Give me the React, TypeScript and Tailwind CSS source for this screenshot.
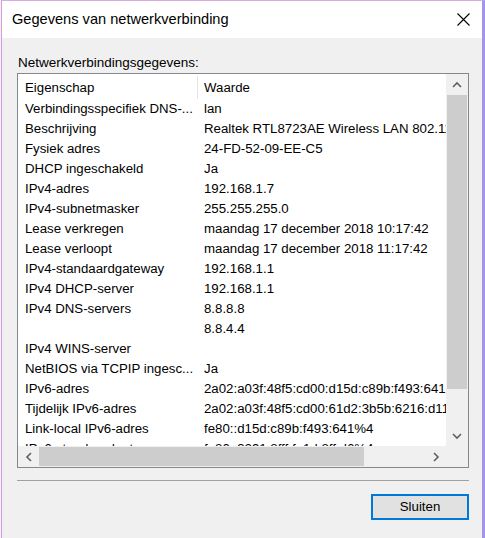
import React from "react";

const rows: [string, string][] = [
  ["Verbindingsspecifiek DNS-...", "lan"],
  ["Beschrijving", "Realtek RTL8723AE Wireless LAN 802.11n PCI-E NIC"],
  ["Fysiek adres", "24-FD-52-09-EE-C5"],
  ["DHCP ingeschakeld", "Ja"],
  ["IPv4-adres", "192.168.1.7"],
  ["IPv4-subnetmasker", "255.255.255.0"],
  ["Lease verkregen", "maandag 17 december 2018 10:17:42"],
  ["Lease verloopt", "maandag 17 december 2018 11:17:42"],
  ["IPv4-standaardgateway", "192.168.1.1"],
  ["IPv4 DHCP-server", "192.168.1.1"],
  ["IPv4 DNS-servers", "8.8.8.8"],
  ["", "8.8.4.4"],
  ["IPv4 WINS-server", ""],
  ["NetBIOS via TCPIP ingesc...", "Ja"],
  ["IPv6-adres", "2a02:a03f:48f5:cd00:d15d:c89b:f493:641"],
  ["Tijdelijk IPv6-adres", "2a02:a03f:48f5:cd00:61d2:3b5b:6216:d11c"],
  ["Link-local IPv6-adres", "fe80::d15d:c89b:f493:641%4"],
  ["IPv6-standaardgateway", "fe80::3291:8fff:fe1d:8ff:d6%4"],
];

function Chevron({ dir }: { dir: "up" | "down" | "left" | "right" }) {
  const d =
    dir === "up"
      ? "M1 6 L5 2 L9 6"
      : dir === "down"
      ? "M1 2 L5 6 L9 2"
      : dir === "left"
      ? "M6 1 L2 5 L6 9"
      : "M2 1 L6 5 L2 9";
  const w = dir === "up" || dir === "down" ? 10 : 8;
  const h = dir === "up" || dir === "down" ? 8 : 10;
  return (
    <svg width={w} height={h} viewBox={`0 0 ${w} ${h}`}>
      <path d={d} fill="none" stroke="#606060" strokeWidth="1.6" />
    </svg>
  );
}

export default function App() {
  return (
    <div
      className="w-[485px] h-[538px] flex bg-white overflow-hidden"
      style={{ fontFamily: '"Liberation Sans", Arial, sans-serif' }}
    >
      <div className="w-[1px] bg-[#f6eef8]" />
      <div className="flex-1 flex flex-col border-l border-t border-r-[3px] border-l-[#cf9fdc] border-t-[#d9a9e2] border-r-[#a595e6]">
        {/* title bar */}
        <div className="h-[37px] bg-white flex items-center justify-between pl-[10px] pr-[12px]">
          <span className="text-[14.6px] text-black">Gegevens van netwerkverbinding</span>
          <svg width="13" height="13" viewBox="0 0 13 13">
            <path d="M0.5 0.5 L12.5 12.5 M12.5 0.5 L0.5 12.5" stroke="#000" strokeWidth="1.1" />
          </svg>
        </div>
        {/* body */}
        <div className="flex-1 bg-[#f0f0f0] flex flex-col pl-[15px] pr-[13px]">
          <div className="text-[13.5px] text-black mt-[15px] h-[20px] leading-[20px] pl-[1px]">
            Netwerkverbindingsgegevens:
          </div>
          <div className="w-[452px] h-[395px] border border-[#828790] bg-white flex flex-col">
            <div className="flex h-[372px]">
              {/* list */}
              <div className="w-[428px] overflow-hidden text-[13.25px] text-black">
                <div className="flex h-[25px] items-center pt-[2px]">
                  <div className="w-[180px] shrink-0 h-full pl-[7px] flex items-center border-r border-[#e5e5e5] whitespace-nowrap">
                    Eigenschap
                  </div>
                  <div className="pl-[6px] whitespace-nowrap">Waarde</div>
                </div>
                {rows.map(([k, v], i) => (
                  <div key={i} className="flex h-[20px] items-center whitespace-nowrap">
                    <div className="w-[180px] shrink-0 pl-[7px] overflow-hidden">{k}</div>
                    <div className="pl-[6px] shrink-0">{v}</div>
                  </div>
                ))}
              </div>
              {/* vertical scrollbar */}
              <div className="w-[22px] bg-[#f0f0f0] flex flex-col">
                <div className="h-[21px] flex items-center justify-center">
                  <Chevron dir="up" />
                </div>
                <div className="h-[294px] mx-[1px] bg-[#cdcdcd]" />
                <div className="flex-1" />
                <div className="h-[21px] flex items-center justify-center">
                  <Chevron dir="down" />
                </div>
              </div>
            </div>
            {/* horizontal scrollbar */}
            <div className="flex-1 flex bg-[#f0f0f0]">
              <div className="w-[21px] flex items-center justify-center">
                <Chevron dir="left" />
              </div>
              <div className="w-[325px] my-[1px] bg-[#cdcdcd]" />
              <div className="flex-1" />
              <div className="w-[21px] flex items-center justify-center">
                <Chevron dir="right" />
              </div>
              <div className="w-[22px]" />
            </div>
          </div>
          <div className="mt-[12px] w-[452px] h-[1px] bg-[#a0a0a0]" />
          <div className="flex justify-end mt-[13px] pr-[0px]">
            <button className="w-[98px] h-[26px] border-2 border-[#0078d7] bg-[#e1e1e1] text-[13.25px] text-black flex items-center justify-center">
              Sluiten
            </button>
          </div>
        </div>
      </div>
    </div>
  );
}
